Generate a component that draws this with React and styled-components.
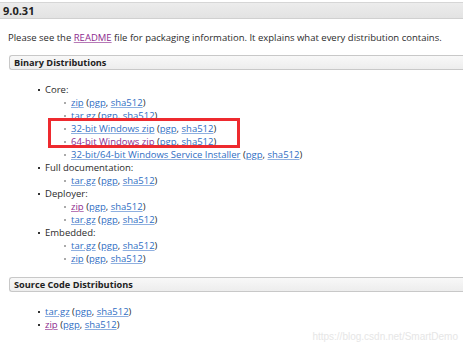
import React from 'react'
import styled, { createGlobalStyle } from 'styled-components'

const Global = createGlobalStyle`
  html, body { margin:0; padding:0; background:#fff; }
  body {
    width:463px;
    height:347px;
    overflow:hidden;
    font-family:'Open Sans', 'Noto Sans', sans-serif;
    font-size:9.5px;
    color:#2b2b2b;
  }
`

const Page = styled.div`
  position:relative;
  padding-top:2px;
`

const VersionBar = styled.h3`
  margin:0;
  height:15px;
  line-height:15px;
  padding-left:3px;
  font-size:11px;
  font-weight:700;
  color:#222;
  background:linear-gradient(#ececec, #e3e3e3);
  border-top:1px solid #d6d6d6;
  border-bottom:1px solid #d0d0d0;
`

const Intro = styled.p`
  margin:12px 0 0 8px;
  line-height:14px;
  white-space:nowrap;
`

const SectionBox = styled.h4`
  margin:${p => p.$top}px 0 0 9px;
  height:13px;
  line-height:13px;
  padding-left:4px;
  font-size:9.2px;
  font-weight:700;
  color:#222;
  background:linear-gradient(#f8f8f8, #ededed);
  border:1px solid #c8c8c8;
  border-right:none;
  border-radius:3px 0 0 3px;
`

const List = styled.ul`
  margin:${p => p.$top}px 0 0 0;
  padding:0 0 0 38px;
  list-style:none;
`

const Item = styled.li`
  position:relative;
  line-height:13px;
  padding-left:7px;
  white-space:nowrap;
  &::before{
    content:'';
    position:absolute;
    left:0;
    top:6px;
    width:2px;
    height:2px;
    background:${p => p.$sub ? '#aaa' : '#333'};
  }
`

const SubList = styled.ul`
  position:relative;
  margin:0;
  padding:0 0 0 19px;
  list-style:none;
`

const Link = styled.a`
  color:${p => p.$visited ? '#8e2a8e' : '#2f6ec4'};
  text-decoration:underline;
  text-decoration-color:${p => p.$visited ? '#b77ab7' : '#8fb0e0'};
  text-underline-offset:1px;
`

const Highlight = styled.div`
  position:absolute;
  left:3px;
  top:${p => p.$row * 13 - 4}px;
  width:186px;
  height:24px;
  border:3px solid #ee2a2f;
  pointer-events:none;
`

const Watermark = styled.div`
  position:absolute;
  right:5px;
  top:331px;
  font-family:'Liberation Sans', Arial, sans-serif;
  font-size:10px;
  color:#e6e6e6;
`

const Files = ({ name, visited }) => (
  <>
    <Link href="#" $visited={visited}>{name}</Link> (<Link href="#">pgp</Link>, <Link href="#">sha512</Link>)
  </>
)

const SubItem = props => (
  <Item $sub>
    <Files {...props} />
  </Item>
)

const TopFile = props => (
  <Item>
    <Files {...props} />
  </Item>
)

export default function App() {
  return (
    <Page>
      <Global />
      <VersionBar>9.0.31</VersionBar>
      <Intro>
        Please see the <Link href="#" $visited>README</Link> file for packaging information. It explains what every distribution contains.
      </Intro>
      <SectionBox $top={10}>Binary Distributions</SectionBox>
      <List $top={13}>
        <Item>
          Core:
          <SubList>
            <SubItem name="zip" />
            <SubItem name="tar.gz" />
            <SubItem name="32-bit Windows zip" />
            <SubItem name="64-bit Windows zip" visited />
            <SubItem name="32-bit/64-bit Windows Service Installer" />
            <Highlight $row={2} />
          </SubList>
        </Item>
        <Item>
          Full documentation:
          <SubList>
            <SubItem name="tar.gz" />
          </SubList>
        </Item>
        <Item>
          Deployer:
          <SubList>
            <SubItem name="zip" visited />
            <SubItem name="tar.gz" />
          </SubList>
        </Item>
        <Item>
          Embedded:
          <SubList>
            <SubItem name="tar.gz" />
            <SubItem name="zip" />
          </SubList>
        </Item>
      </List>
      <SectionBox $top={12}>Source Code Distributions</SectionBox>
      <List $top={13}>
        <TopFile name="tar.gz" />
        <TopFile name="zip" visited />
      </List>
      <Watermark>https://blog.csdn.net/SmartDemo</Watermark>
    </Page>
  )
}
